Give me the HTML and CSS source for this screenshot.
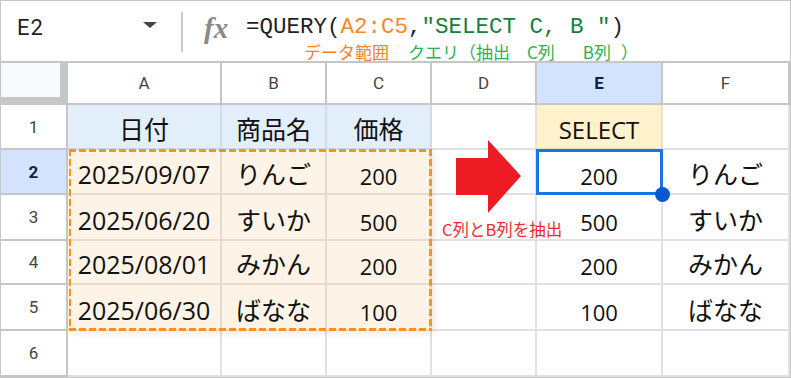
FILE: index.html
```html
<!DOCTYPE html>
<html lang="ja">
<head>
    <meta charset="UTF-8">
    <meta name="viewport" content="width=device-width, initial-scale=1.0">
    <title>QUERY SELECT</title>
    <link rel="stylesheet" href="styles.css">
</head>
<body>
    <div class="sheet">
        <div class="formula-bar">
            <div class="name-box">
                <span class="cell-ref">E2</span>
                <span class="caret"></span>
            </div>
            <div class="divider"></div>
            <div class="fx">fx</div>
            <div class="formula">
                <div class="formula-text">=QUERY(<span class="ref">A2:C5</span>,<span class="str">"SELECT C, B "</span>)</div>
                <div class="notes">
                    <span class="note-range">データ範囲</span>
                    <span class="note-query">クエリ（抽出</span>
                    <span class="note-query note-c">C列</span>
                    <span class="note-query note-b">B列</span>
                    <span class="note-query note-end">）</span>
                </div>
            </div>
        </div>

        <div class="grid-wrap">
            <div class="grid">
                <!-- column headers -->
                <div class="corner"></div>
                <div class="ch">A</div>
                <div class="ch">B</div>
                <div class="ch">C</div>
                <div class="ch">D</div>
                <div class="ch ch-active">E</div>
                <div class="ch">F</div>

                <!-- row 1 -->
                <div class="rh">1</div>
                <div class="cell head">日付</div>
                <div class="cell head">商品名</div>
                <div class="cell head">価格</div>
                <div class="cell"></div>
                <div class="cell select">SELECT</div>
                <div class="cell"></div>

                <!-- row 2 -->
                <div class="rh rh-active">2</div>
                <div class="cell data date">2025/09/07</div>
                <div class="cell data jp">りんご</div>
                <div class="cell data num">200</div>
                <div class="cell"></div>
                <div class="cell num">200</div>
                <div class="cell jp">りんご</div>

                <!-- row 3 -->
                <div class="rh">3</div>
                <div class="cell data date">2025/06/20</div>
                <div class="cell data jp">すいか</div>
                <div class="cell data num">500</div>
                <div class="cell"></div>
                <div class="cell num">500</div>
                <div class="cell jp">すいか</div>

                <!-- row 4 -->
                <div class="rh">4</div>
                <div class="cell data date">2025/08/01</div>
                <div class="cell data jp">みかん</div>
                <div class="cell data num">200</div>
                <div class="cell"></div>
                <div class="cell num">200</div>
                <div class="cell jp">みかん</div>

                <!-- row 5 -->
                <div class="rh">5</div>
                <div class="cell data date">2025/06/30</div>
                <div class="cell data jp">ばなな</div>
                <div class="cell data num">100</div>
                <div class="cell"></div>
                <div class="cell num">100</div>
                <div class="cell jp">ばなな</div>

                <!-- row 6 -->
                <div class="rh">6</div>
                <div class="cell"></div>
                <div class="cell"></div>
                <div class="cell"></div>
                <div class="cell"></div>
                <div class="cell"></div>
                <div class="cell"></div>
            </div>

            <!-- marks drawn over the grid -->
            <div class="grid overlay">
                <div class="range-box"></div>
                <div class="arrow-note">
                    <svg class="arrow" viewBox="0 0 105 136" width="105" height="136">
                        <polygon points="24,53 56,53 56,35 89,71 56,108 56,90 24,90" fill="#ed1c24"/>
                    </svg>
                    <span class="arrow-label">C列とB列を抽出</span>
                </div>
                <div class="selection"><span class="handle"></span></div>
            </div>
        </div>
    </div>
</body>
</html>
```

FILE: styles.css
```css
* {
    box-sizing: border-box;
}

body {
    margin: 0;
    background: #fff;
    font-family: Roboto, "Noto Sans CJK JP", sans-serif;
    color: #1f1f1f;
}

.sheet {
    width: 791px;
    height: 378px;
    border: 1px solid #c4c7c5;
    overflow: hidden;
}

/* formula bar */
.formula-bar {
    display: flex;
    height: 62px;
    border-bottom: 2px solid #c4c7c5;
}

.name-box {
    width: 180px;
    display: flex;
    align-items: center;
    justify-content: space-between;
    padding: 0 24px 7px 16px;
    font-size: 22px;
    letter-spacing: 1px;
}

.caret {
    border-left: 7px solid transparent;
    border-right: 7px solid transparent;
    border-top: 6px solid #444;
    margin-bottom: 6px;
}

.divider {
    width: 2px;
    height: 40px;
    margin-top: 11px;
    background: #c7c7c7;
}

.fx {
    width: 24px;
    margin-left: 21px;
    padding-top: 11px;
    font-family: "Liberation Serif", serif;
    font-style: italic;
    font-weight: bold;
    font-size: 29px;
    color: #8a8a8a;
}

.formula {
    margin-left: 18px;
    padding-top: 12px;
}

.formula-text {
    font-family: "Liberation Mono", monospace;
    font-size: 22.5px;
    line-height: 28px;
    white-space: pre;
    color: #1f1f1f;
}

.formula-text .ref {
    color: #f5892a;
}

.formula-text .str {
    color: #188038;
}

.notes {
    display: flex;
    margin: 2px 0 0 58px;
    font-family: "Noto Sans CJK JP", sans-serif;
    font-size: 17px;
    line-height: 18px;
    white-space: nowrap;
}

.note-range {
    color: #f5822a;
}

.note-query {
    color: #2bb24c;
    margin-left: 19px;
}

.note-c {
    margin-left: 17px;
}

.note-b {
    margin-left: 28px;
}

.note-end {
    margin-left: 10px;
}

/* grid: cells and an overlay layer share one area */
.grid-wrap {
    display: grid;
}

.grid {
    grid-area: 1 / 1;
    display: grid;
    grid-template-columns: 67px 154px 105px 105px 105px 126px 127px;
    grid-template-rows: 42px 45px 45px 46px 44px 46px 46px;
}

.overlay {
    pointer-events: none;
}

.corner {
    background: #f8f9fa;
    border-right: 8px solid #c4c7c5;
    border-bottom: 8px solid #c4c7c5;
}

.ch,
.rh {
    display: flex;
    align-items: center;
    justify-content: center;
    font-size: 17px;
    color: #444;
    background: #fff;
    border-right: 2px solid #c4c7c5;
    border-bottom: 2px solid #c4c7c5;
}

.ch-active,
.rh-active {
    background: #d3e3fd;
    color: #0b1f4d;
    font-weight: bold;
}

.cell {
    display: flex;
    align-items: flex-end;
    justify-content: center;
    padding-bottom: 2px;
    font-family: "Open Sans", "Noto Sans CJK JP", sans-serif;
    font-size: 22px;
    color: #111;
    border-right: 2px solid #e1e1e1;
    border-bottom: 2px solid #e1e1e1;
    white-space: nowrap;
}

.head {
    font-size: 25px;
    background: #e3eefb;
    border-color: #d2dbe6;
}

.select {
    font-size: 24px;
    background: #fff2cc;
    border-color: #ebe1c4;
}

.data {
    background: #fdf3e6;
    border-color: #e6dccd;
}

.date,
.jp {
    font-size: 25px;
}

/* dashed range around A2:C5 */
.range-box {
    grid-column: 2 / 5;
    grid-row: 3 / 7;
    background:
        repeating-linear-gradient(90deg, #f7941d 0 7px, transparent 7px 10px) top left / 100% 3px no-repeat,
        repeating-linear-gradient(90deg, #f7941d 0 7px, transparent 7px 10px) bottom left / 100% 3px no-repeat,
        repeating-linear-gradient(180deg, #f7941d 0 7px, transparent 7px 10px) top left / 2px 100% no-repeat,
        repeating-linear-gradient(180deg, #f7941d 0 7px, transparent 7px 10px) top right / 3px 100% no-repeat;
    margin: -1px 0 0 1px;
    box-shadow: 3px 3px 6px rgba(0, 0, 0, 0.08);
}

.arrow-note {
    grid-column: 5 / 6;
    grid-row: 2 / 5;
    position: relative;
}

.arrow {
    display: block;
}

.arrow-label {
    position: absolute;
    left: 10px;
    top: 112px;
    font-family: "Noto Sans CJK JP", sans-serif;
    font-size: 16.5px;
    color: #ee2a30;
    white-space: nowrap;
}

.selection {
    grid-column: 6 / 7;
    grid-row: 3 / 4;
    position: relative;
    margin: -1px 0 0 -1px;
    border: 3px solid #1a73e8;
}

.handle {
    position: absolute;
    right: -10px;
    bottom: -10px;
    width: 15px;
    height: 15px;
    border-radius: 50%;
    background: #0b57d0;
}
```
